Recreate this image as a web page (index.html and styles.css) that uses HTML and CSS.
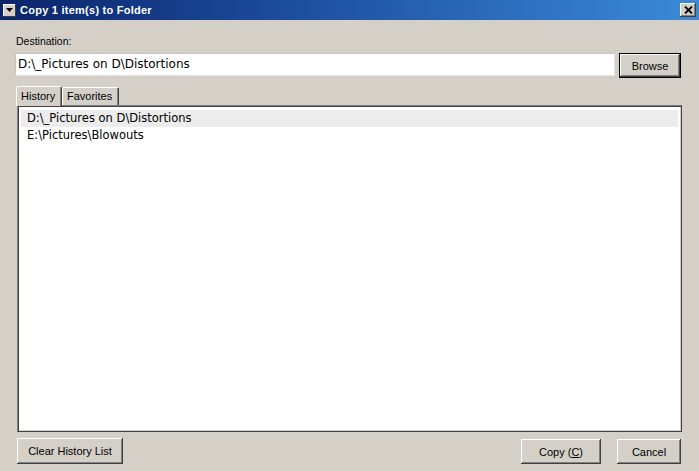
FILE: index.html
```html
<!DOCTYPE html>
<html>
<head>
<meta charset="utf-8">
<link rel="stylesheet" href="styles.css">
</head>
<body>
<div class="window">
  <div class="titlebar">
    <div class="sysbtn"><svg width="9" height="6" viewBox="0 0 9 6"><polygon points="1,1 8,1 4.5,5" fill="#000"/></svg></div>
    <div class="title">Copy 1 item(s) to Folder</div>
    <div class="closebtn"><svg width="9" height="8" viewBox="0 0 9 8"><path d="M1 0.5 L8 7.5 M8 0.5 L1 7.5" stroke="#000" stroke-width="1.8"/></svg></div>
  </div>
  <div class="content">
    <div class="label">Destination:</div>
    <div class="dest-row">
      <div class="input">D:\_Pictures on D\Distortions</div>
      <div class="btn default browse"><span>Browse</span></div>
    </div>
    <div class="tabs">
      <div class="tab active">History</div>
      <div class="tab">Favorites</div>
    </div>
    <div class="panel">
      <div class="item selected">D:\_Pictures on D\Distortions</div>
      <div class="item">E:\Pictures\Blowouts</div>
    </div>
    <div class="footer">
      <div class="btn clear">Clear History List</div>
      <div class="spacer"></div>
      <div class="btn copy">Copy (<u>C</u>)</div>
      <div class="btn cancel">Cancel</div>
    </div>
  </div>
</div>
</body>
</html>
```
FILE: styles.css
```css
html, body {
  margin: 0;
  padding: 0;
}
body {
  width: 699px;
  height: 471px;
  background: #d4d0c8;
  font-family: "Liberation Sans", sans-serif;
  font-size: 11px;
  color: #000;
  overflow: hidden;
}
.window {
  width: 699px;
  height: 471px;
  display: flex;
  flex-direction: column;
}
.titlebar {
  height: 20px;
  display: flex;
  align-items: center;
  padding: 0 3px;
  background: linear-gradient(to right, #0a246a 0%, #1c4c9c 40%, #3a8ad8 100%);
  box-sizing: border-box;
}
.sysbtn {
  width: 13px;
  height: 13px;
  background: #d4d0c8;
  box-shadow: inset -1px -1px #404040, inset 1px 1px #fff;
  display: flex;
  align-items: center;
  justify-content: center;
}
.title {
  flex: 1;
  color: #fff;
  font-family: "Liberation Sans", sans-serif;
  font-weight: bold;
  font-size: 11px;
  margin-left: 4px;
  letter-spacing: 0.25px;
}
.closebtn {
  width: 16px;
  height: 14px;
  background: #d4d0c8;
  box-shadow: inset -1px -1px #404040, inset 1px 1px #fff, inset -2px -2px #808080;
  display: flex;
  align-items: center;
  justify-content: center;
}
.content {
  flex: 1;
  padding: 15px 18px 0 16px;
  display: flex;
  flex-direction: column;
}
.label {
  height: 13px;
  line-height: 13px;
  font-size: 10.5px;
}
.dest-row {
  display: flex;
  margin-top: 5px;
  height: 25px;
}
.input {
  flex: 1;
  height: 23px;
  box-sizing: border-box;
  background: #fff;
  border: 1px solid #c8c4bc;
  border-right-color: #e8e6e2;
  border-bottom-color: #e8e6e2;
  padding-left: 2px;
  line-height: 21px;
  font-size: 12px;
  font-family: "DejaVu Sans", sans-serif;
  margin-left: -1px;
}
.btn {
  box-sizing: border-box;
  background: #d4d0c8;
  box-shadow: inset -1px -1px #404040, inset 1px 1px #fff, inset -2px -2px #808080;
  display: flex;
  align-items: center;
  justify-content: center;
  font-size: 11px;
}
.btn.default {
  border: 1px solid #000;
}
.browse {
  width: 62px;
  height: 25px;
  margin-left: 4px;
}
.tabs {
  display: flex;
  margin-top: 8px;
  height: 19px;
  align-items: flex-end;
  position: relative;
  z-index: 1;
}
.tab {
  height: 18px;
  box-sizing: border-box;
  padding: 0 4px;
  line-height: 17px;
  font-size: 11px;
  border-top: 1px solid #fff;
  border-left: 1px solid #fff;
  border-right: 1px solid #404040;
  box-shadow: inset -1px 0 #808080;
  border-radius: 2px 2px 0 0;
}
.tab.active {
  height: 20px;
  margin-bottom: -1px;
  line-height: 19px;
  background: #d4d0c8;
  width: 46px;
}
.tab + .tab {
  width: 57px;
}
.panel {
  flex: 0 0 auto;
  height: 327px;
  margin-left: 1px;
  margin-right: -1px;
  box-sizing: border-box;
  background: #fff;
  border: 1px solid #404040;
  border-top-color: #808080;
  border-left-color: #808080;
  box-shadow: inset 1px 1px #404040, inset -1px -1px #d4d0c8;
  padding: 4px 3px;
}
.item {
  height: 17px;
  line-height: 17px;
  padding-left: 6px;
  font-family: "DejaVu Sans", sans-serif;
  font-size: 11.5px;
}
.item.selected {
  background: #ececec;
}
.footer {
  display: flex;
  margin-top: 6px;
  height: 26px;
  align-items: flex-start;
}
.spacer { flex: 1; }
.clear {
  width: 106px;
  height: 26px;
  margin-left: 1px;
}
.copy {
  width: 80px;
  height: 25px;
  margin-top: 1px;
}
.cancel {
  width: 64px;
  height: 25px;
  margin-top: 1px;
  margin-left: 16px;
}
```
